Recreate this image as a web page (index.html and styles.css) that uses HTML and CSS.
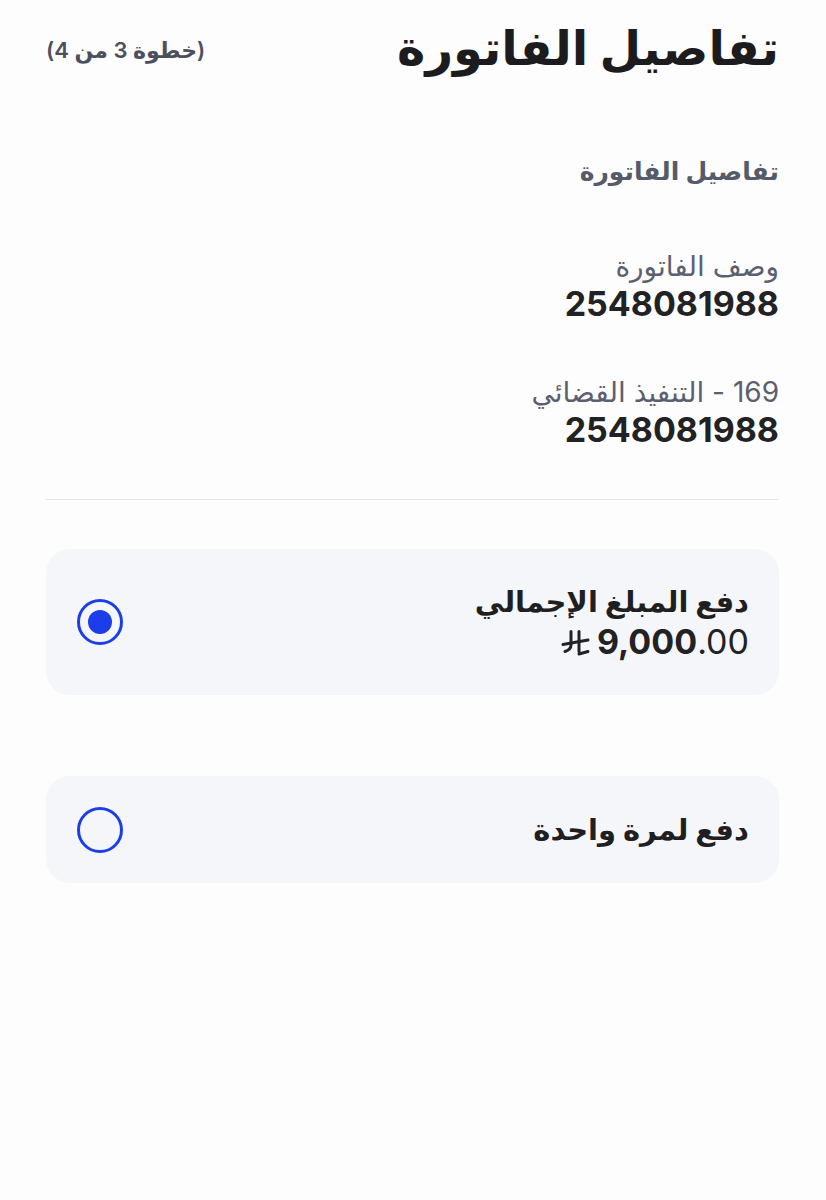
FILE: index.html
```html
<!DOCTYPE html>
<html lang="ar" dir="rtl">
<head>
  <meta charset="UTF-8" />
  <meta name="viewport" content="width=device-width, initial-scale=1.0"/>
  <title>تفاصيل الفاتورة</title>
  <link rel="stylesheet" href="styles.css">
</head>
<body>
  <div class="page">
    <header class="top">
      <h1 class="title">تفاصيل الفاتورة</h1>
      <span class="step">(خطوة 3 من 4)</span>
    </header>

    <section class="details">
      <h2 class="section-title">تفاصيل الفاتورة</h2>
      <div class="field">
        <div class="label">وصف الفاتورة</div>
        <div class="value">2548081988</div>
      </div>
      <div class="field">
        <div class="label">169 - التنفيذ القضائي</div>
        <div class="value">2548081988</div>
      </div>
    </section>

    <hr class="divider">

    <div class="options">
      <label class="option option-total">
        <div class="option-text">
          <div class="option-title">دفع المبلغ الإجمالي</div>
          <div class="amount">
            <span class="num"><b>9,000</b>.00</span>
            <svg class="riyal" viewBox="0 0 30 26" width="30" height="26">
              <path d="M11 1.5 V15 Q11 19.5 5 21.5" />
              <path d="M19 1.5 V21.5" />
              <path d="M3 14.5 L28 10" />
              <path d="M19 24 L28 21.5" />
            </svg>
          </div>
        </div>
        <span class="radio checked"></span>
      </label>

      <label class="option">
        <div class="option-text">
          <div class="option-title">دفع لمرة واحدة</div>
        </div>
        <span class="radio"></span>
      </label>
    </div>
  </div>
</body>
</html>
```

FILE: styles.css
```css
body {
  margin: 0;
  background: #fdfdfd;
  font-family: Inter, "DejaVu Sans", sans-serif;
  color: #1f1f22;
}
.page {
  padding: 20px 47px 0 46px;
}
.top {
  display: flex;
  justify-content: space-between;
  align-items: center;
}
.title {
  margin: 0;
  font-size: 48px;
  line-height: 56px;
  font-weight: 700;
  color: #1c1c1e;
}
.step {
  font-size: 22px;
  font-weight: 600;
  color: #4b505c;
  margin-top: 3px;
}
.details {
  margin-top: 80px;
}
.section-title {
  margin: 0 0 62px;
  font-size: 25px;
  line-height: 30px;
  font-weight: 600;
  color: #555b69;
}
.field {
  margin-bottom: 50px;
}
.field:last-child {
  margin-bottom: 0;
}
.label {
  font-size: 28px;
  color: #5b6070;
  line-height: 36px;
}
.value {
  font-size: 34px;
  font-weight: 700;
  color: #222225;
  line-height: 40px;
}
.divider {
  border: none;
  border-top: 1.5px solid #e3e5ec;
  margin: 49px 0 49px;
}
.options {
  display: flex;
  flex-direction: column;
  gap: 81px;
}
.option {
  display: flex;
  align-items: center;
  justify-content: space-between;
  background: #f5f6fa;
  border-radius: 24px;
  padding: 0 30px 0 31px;
  cursor: pointer;
}
.option-total {
  height: 146px;
}
.option:not(.option-total) {
  height: 107px;
}
.option-title {
  font-size: 29px;
  font-weight: 700;
  color: #1f1f22;
  line-height: 40px;
}
.amount {
  display: flex;
  align-items: center;
  gap: 7px;
}
.num {
  direction: ltr;
  font-size: 34px;
  color: #222225;
  line-height: 40px;
}
.riyal {
  fill: none;
  stroke: #222225;
  stroke-width: 3;
  stroke-linecap: round;
  stroke-linejoin: round;
  margin-top: 2px;
}
.radio {
  width: 40px;
  height: 40px;
  border: 3.5px solid #1c3ee8;
  border-radius: 50%;
  display: flex;
  align-items: center;
  justify-content: center;
}
.radio.checked::after {
  content: "";
  width: 24px;
  height: 24px;
  border-radius: 50%;
  background: #1c3ee8;
}
```
